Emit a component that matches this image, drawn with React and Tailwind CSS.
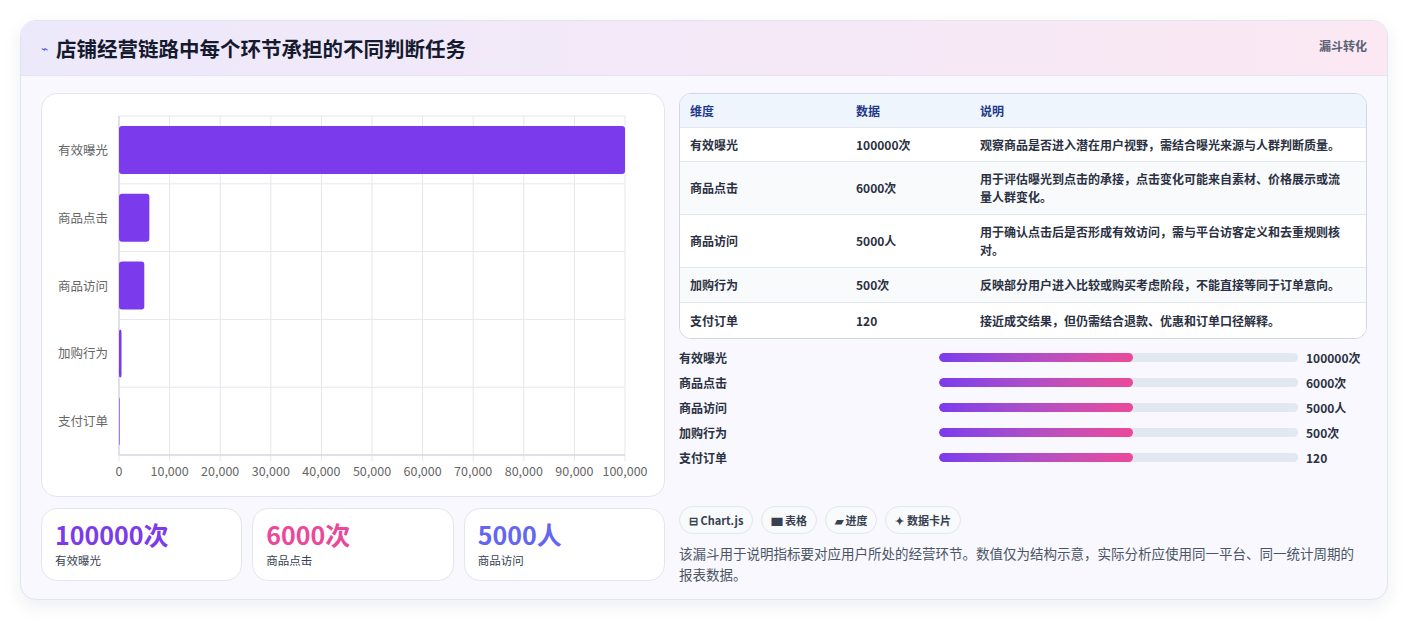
export default function App() {
  const f = { fontFamily: '"Noto Sans CJK SC", "Noto Sans", sans-serif' };
  const rows = [
    ["有效曝光", "100000次", "观察商品是否进入潜在用户视野，需结合曝光来源与人群判断质量。", 100000],
    ["商品点击", "6000次", "用于评估曝光到点击的承接，点击变化可能来自素材、价格展示或流量人群变化。", 6000],
    ["商品访问", "5000人", "用于确认点击后是否形成有效访问，需与平台访客定义和去重规则核对。", 5000],
    ["加购行为", "500次", "反映部分用户进入比较或购买考虑阶段，不能直接等同于订单意向。", 500],
    ["支付订单", "120", "接近成交结果，但仍需结合退款、优惠和订单口径解释。", 120],
  ];
  const rh = [33, 34, 53, 53, 35, 36];
  const X0 = 78, W = 506, T = 23, RH = 67.8;
  return (
    <div className="w-[1408px] h-[620px] bg-white pt-5 px-5" style={f}>
      <div className="h-[580px] rounded-2xl border border-[#e2e5f0] bg-[#f8f8fe] shadow-[0_6px_18px_rgba(30,40,80,0.08)] overflow-hidden">
        <div className="h-[55px] flex items-center justify-between px-5 bg-gradient-to-r from-[#ece9fb] to-[#fbe8f3] border-b border-[#e6e4f2]">
          <div className="flex items-center gap-2">
            <span className="text-[#5b5bd6] text-[12px]">⌁</span>
            <span className="text-[20.5px] font-bold text-[#161a2e]">店铺经营链路中每个环节承担的不同判断任务</span>
          </div>
          <span className="text-[12px] font-semibold text-[#5a6275] self-start mt-4">漏斗转化</span>
        </div>
        <div className="flex gap-[14px] px-5 pt-[17px]">
          <div className="w-[624px] flex flex-col gap-[11px]">
            <div className="h-[404px] rounded-2xl border border-[#e2e6ef] bg-white">
              <svg width="622" height="402" viewBox="1 1 622 402">
                {Array.from({ length: 11 }).map((_, i) => (
                  <line key={i} x1={X0 + i * W / 10} x2={X0 + i * W / 10} y1={T} y2={T + 339 + 6} stroke="#e5e7eb" />
                ))}
                {Array.from({ length: 6 }).map((_, i) => (
                  <line key={i} x1={X0} x2={X0 + W} y1={T + i * RH} y2={T + i * RH} stroke="#e5e7eb" />
                ))}
                <line x1={X0} x2={X0} y1={T} y2={T + 339} stroke="#cbd0da" />
                <line x1={X0} x2={X0 + W} y1={T + 339} y2={T + 339} stroke="#cbd0da" />
                {rows.map((r, i) => (
                  <g key={i}>
                    <rect x={X0} y={T + i * RH + 10} width={Math.max(0.6, r[3] / 100000 * W)} height={48} rx={3} fill="#7c3aed" />
                    <text x={67} y={T + i * RH + 39} textAnchor="end" fontSize="12.5" fill="#666">{r[0]}</text>
                  </g>
                ))}
                {Array.from({ length: 11 }).map((_, i) => (
                  <text key={i} x={X0 + i * W / 10} y={383} textAnchor="middle" fontSize="12.5" fill="#666">{i === 0 ? "0" : (i * 10000).toLocaleString("en-US")}</text>
                ))}
              </svg>
            </div>
            <div className="grid grid-cols-3 gap-[10px]">
              {[["100000次", "text-[#7c3aed]", "有效曝光"], ["6000次", "text-[#ec4899]", "商品点击"], ["5000人", "text-[#6366f1]", "商品访问"]].map(([v, c, l]) => (
                <div key={l} className="h-[73px] rounded-2xl border border-[#e2e6ef] bg-white px-[13px] pt-[9px]">
                  <div className={`text-[25px] font-bold leading-[32px] ${c}`}>{v}</div>
                  <div className="text-[11.5px] text-[#374151] mt-[2px]">{l}</div>
                </div>
              ))}
            </div>
          </div>
          <div className="flex-1 flex flex-col">
            <div className="rounded-xl border border-[#cfd6e4] overflow-hidden bg-white text-[12px] font-semibold text-[#2b3142]">
              {[["维度", "数据", "说明"], ...rows].map((r, i) => (
                <div key={i} className={`flex items-center px-[10px] ${i ? "border-t border-[#e3e7ef] " + (i % 2 ? "bg-white" : "bg-[#f8fafc]") : "bg-[#eff5fd] text-[#1e3a8a]"}`} style={{ height: rh[i] }}>
                  <div className="w-[166px] shrink-0">{r[0]}</div>
                  <div className="w-[124px] shrink-0">{r[1]}</div>
                  <div className="flex-1 leading-[18px] pr-3">{r[2]}</div>
                </div>
              ))}
            </div>
            <div className="flex flex-col mt-[6px] text-[12px] font-semibold text-[#2b3142]">
              {rows.map(r => (
                <div key={r[0]} className="flex items-center h-[25px]">
                  <div className="w-[260px]">{r[0]}</div>
                  <div className="w-[359px] h-[9px] rounded-full bg-[#e2e8f0] overflow-hidden">
                    <div className="h-full w-[54%] rounded-full bg-gradient-to-r from-[#7c3aed] to-[#ec4899]" />
                  </div>
                  <div className="ml-2">{r[1]}</div>
                </div>
              ))}
            </div>
            <div className="flex gap-[8px] mt-[36px] text-[11px] font-semibold text-[#374151]">
              {["⊟ Chart.js", "▆ 表格", "▰ 进度", "✦ 数据卡片"].map(c => (
                <span key={c} className="h-[28px] px-[9px] flex items-center rounded-full border border-[#e2e6ef] bg-[#f8fafc]">{c}</span>
              ))}
            </div>
            <p className="mt-[9px] text-[13.5px] leading-[21px] text-[#4b5563]">该漏斗用于说明指标要对应用户所处的经营环节。数值仅为结构示意，实际分析应使用同一平台、同一统计周期的报表数据。</p>
          </div>
        </div>
      </div>
    </div>
  );
}
